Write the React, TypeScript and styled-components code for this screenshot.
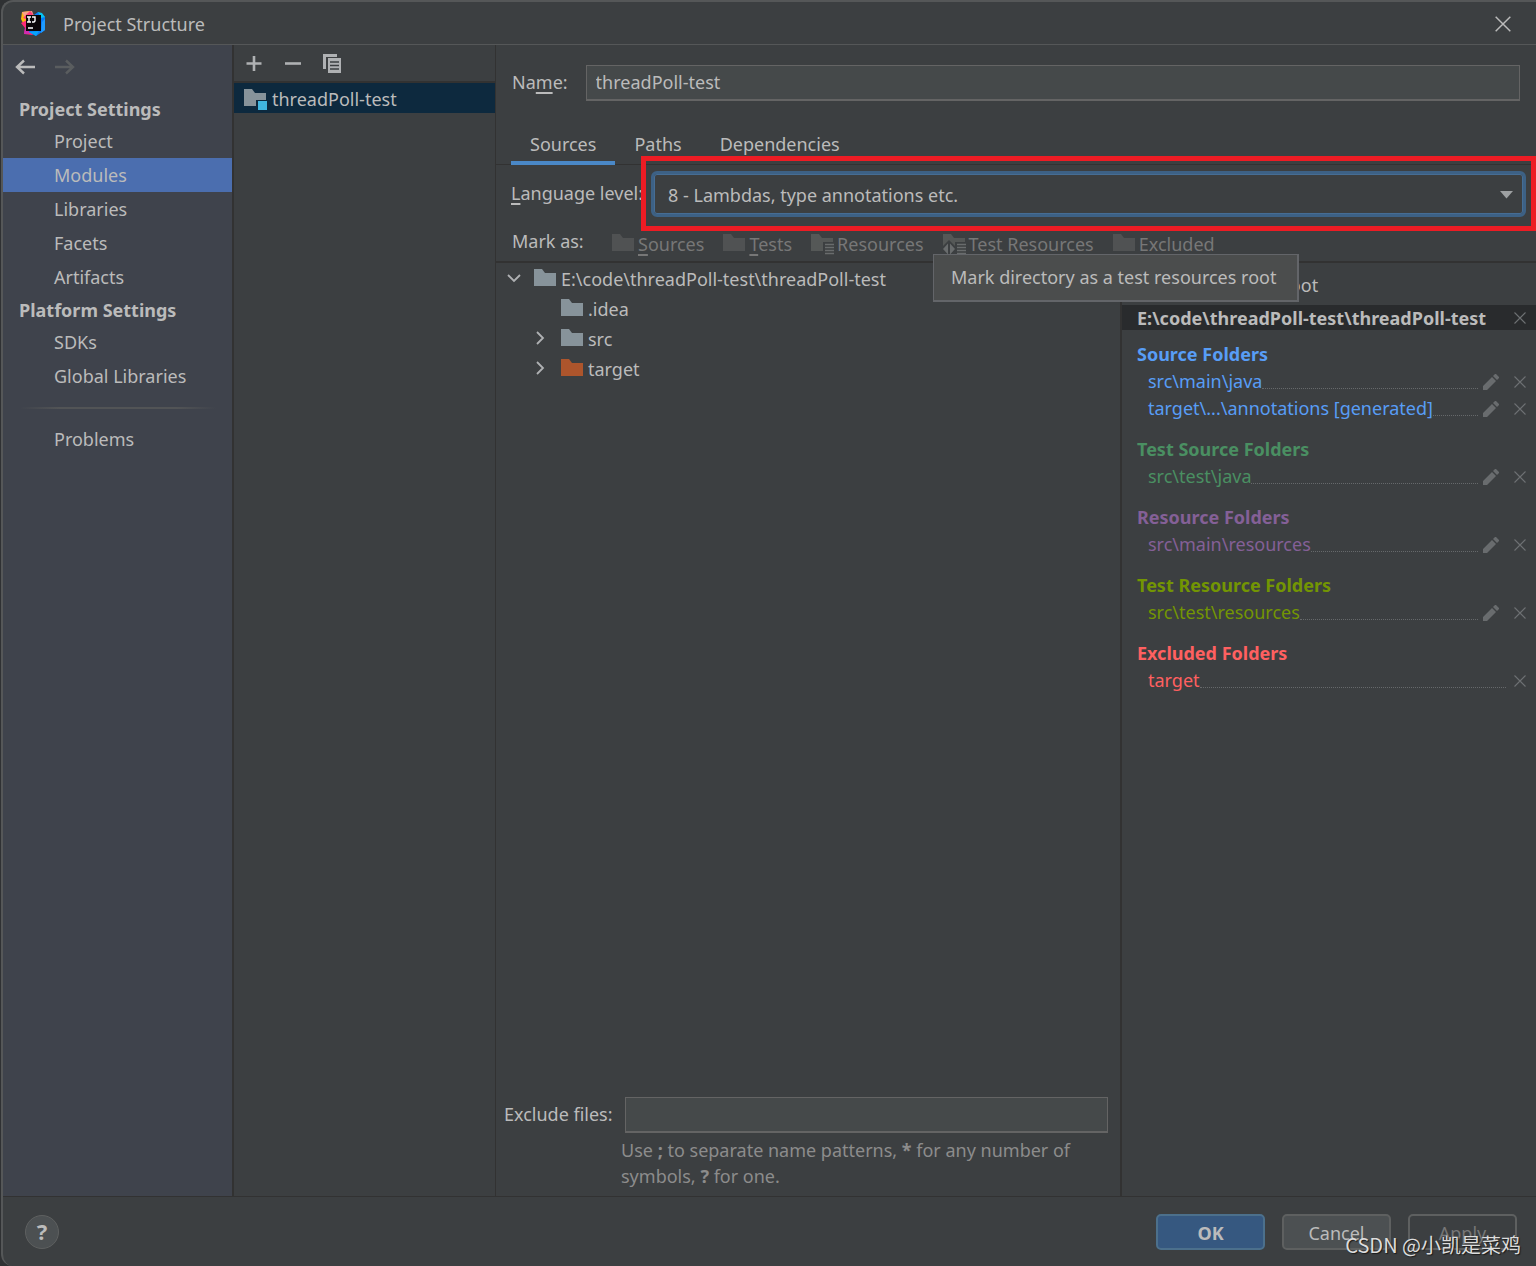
import React, { useState } from "react";
import styled, { createGlobalStyle, css } from "styled-components";

const color = {
  panel: "#3c3f41",
  sidebar: "#3f434c",
  line: "#323232",
  edge: "#555758",
  text: "#bbbbbb",
  muted: "#777777",
  hint: "#8c8c8c",
  field: "#45494a",
  fieldBorder: "#646464",
  icon: "#afb1b3",
  accent: "#4a88c7",
};

const GlobalStyle = createGlobalStyle`
  *, *::before, *::after { box-sizing: border-box; }
  body {
    margin: 0;
    background: #2f3133;
    color: ${color.text};
    font: 18px/24px "Noto Sans", "Noto Sans CJK SC", sans-serif;
  }
  button, input, select { font: inherit; color: inherit; }
  svg { display: block; flex: none; }
`;

const Dialog = styled.div`
  position: relative;
  display: flex;
  flex-direction: column;
  min-height: 100vh;
  padding-top: 1px;
  margin-left: 1px;
  background: ${color.panel};
  border: 2px solid ${color.edge};
  border-right: 0;
  border-bottom: 0;
  border-radius: 12px 0 0 12px;
`;

const TitleBar = styled.header`
  display: flex;
  align-items: center;
  height: 42px;
  padding: 0 25px 0 18px;
  border-bottom: 1px solid ${color.edge};
`;

const Title = styled.h1`
  flex: 1;
  margin: 0 0 0 17px;
  font-size: 18px;
  font-weight: 400;
`;

const IconButton = styled.button`
  display: grid;
  place-items: center;
  flex: none;
  padding: 0;
  border: 0;
  background: none;
`;

const Body = styled.div`
  display: flex;
  flex: 1;
`;

const Sidebar = styled.nav`
  display: flex;
  flex-direction: column;
  width: 231px;
  flex: none;
  background: ${color.sidebar};
  border-right: 2px solid ${color.line};
`;

const History = styled.div`
  display: flex;
  gap: 20px;
  padding: 12px 12px 17px;
`;

const NavHeading = styled.h2`
  margin: 0;
  padding-left: 16px;
  font-size: 18px;
  line-height: 30px;
  font-weight: 700;

  a + & { margin-top: 1px; }
`;

const NavLink = styled.a<{ $active?: boolean }>`
  padding-left: 51px;
  line-height: 34px;
  color: inherit;
  text-decoration: none;
  background: ${(p) => (p.$active ? "#4b6eaf" : "transparent")};
`;

const NavDivider = styled.hr`
  width: 196px;
  height: 2px;
  margin: 14px 17px 13px;
  border: 0;
  background: linear-gradient(90deg, transparent, #525456 20%, #525456 80%, transparent);
`;

const ModuleColumn = styled.section`
  width: 262px;
  flex: none;
  border-right: 1px solid ${color.line};
`;

const ModuleToolbar = styled.div`
  display: flex;
  align-items: center;
  gap: 19px;
  height: 38px;
  padding: 0 10px;
  border-bottom: 2px solid ${color.line};
`;

const ModuleRow = styled.div`
  display: flex;
  align-items: center;
  gap: 5px;
  height: 30px;
  padding: 1px 10px 0;
  background: #0d293e;
`;

const Main = styled.main`
  display: flex;
  flex: 1;
  flex-direction: column;
  min-width: 0;
`;

const NameRow = styled.div`
  display: flex;
  align-items: center;
  gap: 18px;
  padding: 20px 16px 0;

  label { padding-bottom: 2px; }
`;

const TextInput = styled.input`
  flex: 1;
  min-width: 0;
  height: 36px;
  padding: 0 9px 2px;
  background: ${color.field};
  border: 1px solid ${color.fieldBorder};
  border-bottom-width: 2px;
  outline: 0;
`;

const Mnemonic = styled.span`
  text-decoration: underline 2px;
  text-underline-offset: 3px;
`;

const Tabs = styled.div`
  display: flex;
  height: 64px;
  padding: 23px 0 0 15px;
  border-bottom: 1px solid ${color.line};
`;

const Tab = styled.button<{ $active?: boolean }>`
  height: 41px;
  padding: 2px 19px 0;
  border: 0;
  border-bottom: 4px solid ${(p) => (p.$active ? color.accent : "transparent")};
  background: none;
`;

const LanguageRow = styled.div`
  position: relative;
  display: flex;
  align-items: center;
  padding: 6px 10px 0 15px;

  label {
    width: 140px;
    flex: none;
    padding-bottom: 2px;
  }
`;

const SelectBox = styled.div`
  position: relative;
  flex: 1;

  svg {
    position: absolute;
    right: 13px;
    top: 20px;
    pointer-events: none;
  }
`;

const Select = styled.select`
  appearance: none;
  display: block;
  width: 100%;
  height: 46px;
  padding: 2px 14px 0;
  background: ${color.panel};
  border: 3px solid #3d6185;
  border-radius: 6px;
  box-shadow: inset 0 0 0 1px #466d94;
  outline: 0;
`;

const Highlight = styled.div`
  position: absolute;
  inset: -9px 0 -14px 145px;
  border: 5px solid #ed1c24;
  pointer-events: none;
`;

const MarkRow = styled.div`
  position: relative;
  display: flex;
  align-items: center;
  height: 46px;
  padding: 4px 0 0 16px;
  border-bottom: 2px solid ${color.line};
`;

const MarkLabel = styled.span`
  width: 100px;
`;

const MarkActions = styled.div`
  display: flex;
  gap: 19px;
  padding-top: 5px;
`;

const MarkButton = styled.button`
  display: flex;
  align-items: center;
  gap: 3px;
  padding: 0;
  border: 0;
  background: none;
  color: ${color.muted};
`;

const Tooltip = styled.div`
  position: absolute;
  z-index: 2;
  left: 437px;
  top: 37px;
  padding: 10px 21px 11px 17px;
  background: #4b4d4d;
  border: 1px solid #636569;
  border-right-width: 2px;
  border-bottom-width: 2px;
  white-space: nowrap;
`;

const Split = styled.div`
  display: flex;
  flex: 1;
`;

const TreePane = styled.section`
  display: flex;
  flex: 1;
  flex-direction: column;
  min-width: 0;
  border-right: 2px solid ${color.line};
`;

const Tree = styled.ul`
  flex: 1;
  margin: 0;
  padding: 1px 0 0;
  list-style: none;
`;

const TreeItem = styled.li<{ $depth: number }>`
  display: flex;
  align-items: center;
  height: 30px;
  padding-left: ${(p) => 10 + p.$depth * 27}px;
`;

const Twisty = styled.span`
  width: 28px;
`;

const TreeLabel = styled.span`
  margin-left: 4px;
`;

const ExcludeForm = styled.div`
  display: grid;
  grid-template-columns: 121px 1fr;
  align-items: center;
  padding: 0 12px 7px 8px;

  label { padding-bottom: 2px; }
`;

const Hint = styled.p`
  grid-column: 2;
  max-width: 470px;
  margin: 4px 0 0 -4px;
  line-height: 26px;
  color: ${color.hint};
`;

const RootsPane = styled.aside`
  width: 414px;
  flex: none;
`;

const AddRoot = styled.button`
  display: flex;
  align-items: center;
  gap: 10px;
  height: 42px;
  padding: 2px 0 0 16px;
  border: 0;
  background: none;
`;

const RootHeader = styled.div`
  display: flex;
  align-items: center;
  justify-content: space-between;
  height: 25px;
  padding: 0 10px 0 15px;
  margin-bottom: 11px;
  background: #292b2d;
  font-weight: 700;
`;

const Group = styled.section<{ $tint: string }>`
  margin-bottom: 14px;
  padding: 0 10px 0 15px;
  line-height: 27px;
  color: ${(p) => p.$tint};
`;

const GroupTitle = styled.h3`
  margin: 0;
  font-size: 18px;
  font-weight: 700;
`;

const FolderRow = styled.div`
  display: flex;
  align-items: center;
  padding-left: 11px;
`;

const Leader = styled.span`
  flex: 1;
  height: 15px;
  border-bottom: 1px dotted #66696b;
`;

const PencilSlot = styled.div`
  margin: 0 15px 0 5px;
`;

const CloseSlot = styled.div<{ $spaced?: boolean }>`
  margin-left: ${(p) => (p.$spaced ? 8 : 0)}px;
`;

const Footer = styled.footer`
  display: flex;
  align-items: center;
  gap: 17px;
  height: 70px;
  padding: 0 19px 0 22px;
  border-top: 1px solid ${color.line};
`;

const Help = styled.button`
  width: 34px;
  height: 34px;
  margin-right: auto;
  padding: 0 0 2px;
  border: 1px solid #5e6060;
  border-radius: 50%;
  background: #4c5052;
  font-size: 22px;
  font-weight: 700;
`;

const ActionButton = styled.button<{ $kind?: "primary" | "disabled" }>`
  width: 109px;
  height: 36px;
  padding: 2px 0 0;
  border: 2px solid #5e6060;
  border-radius: 5px;
  background: #4c5052;
  ${(p) =>
    p.$kind === "primary" &&
    css`
      border-color: #4c708c;
      background: #365880;
      font-weight: 700;
    `}
  ${(p) =>
    p.$kind === "disabled" &&
    css`
      background: ${color.panel};
      color: ${color.muted};
    `}
`;

const Watermark = styled.div`
  position: absolute;
  right: 15px;
  bottom: 6px;
  font: 20px/30px "Noto Sans CJK SC", sans-serif;
  color: #dcdcdc;
  text-shadow: 1px 1px 1px #1b1b1b;
  pointer-events: none;
`;

const AppLogo = () => (
  <svg width="25" height="25" viewBox="0 0 25 25" aria-hidden="true">
    <path d="M1 1 L9 0 L12 12 L3 14 L0 8Z" fill="#fdb60d" />
    <path d="M1 1 L11 0 L13 5 L5 9Z" fill="#f9a08a" />
    <path d="M9 0 L12 3 L8 9 L2 7Z" fill="#fe3d77" />
    <path d="M0 12 L6 9 L12 24 L3 23 L4 17Z" fill="#fe2a78" />
    <path d="M4 17 L10 16 L8 23 L3 23Z" fill="#d02bb0" />
    <path d="M13 4 L17 1 L24 6 L24 19 L15 25 L8 21Z" fill="#087cfa" />
    <path d="M17 1 L21 2 L24 6 L20 7Z" fill="#07c3f2" />
    <path d="M21 11 L24 8 L24 19 L20 22Z" fill="#1e9bff" />
    <path d="M8 21 L15 25 L18 20Z" fill="#07a4fa" />
    <rect x="5" y="4" width="15" height="16" fill="#0b0608" />
    <path d="M6 6h4M8 6v5M6 11h4M11 6h3v4l-1 1h-2M7 17h5" fill="none" stroke="#fff" strokeWidth="1.4" />
  </svg>
);

const Cross = ({ size = 12, stroke = "#6e7173" }: { size?: number; stroke?: string }) => (
  <svg width={size} height={size} viewBox="0 0 12 12" aria-hidden="true">
    <path d="M.5.5l11 11M11.5.5l-11 11" stroke={stroke} strokeWidth="1.1" />
  </svg>
);

const Arrow = ({ forward }: { forward?: boolean }) => (
  <svg width="20" height="20" viewBox="0 0 20 20" aria-hidden="true">
    <path
      d={forward ? "M0 10h18M11 3.5l7 6.5-7 6.5" : "M20 10H2M9 3.5L2 10l7 6.5"}
      fill="none"
      stroke={forward ? "#5a5d5f" : "#bbbbbb"}
      strokeWidth="2.4"
    />
  </svg>
);

const Plus = () => (
  <svg width="20" height="20" viewBox="0 0 20 20" aria-hidden="true">
    <path d="M10 3v15M2.5 10.500h15" stroke={color.icon} strokeWidth="2.6" />
  </svg>
);

const Minus = () => (
  <svg width="20" height="20" viewBox="0 0 20 20" aria-hidden="true">
    <path d="M2 10.500h16" stroke={color.icon} strokeWidth="2.6" />
  </svg>
);

const Copy = () => (
  <svg width="20" height="20" viewBox="0 0 20 20" aria-hidden="true">
    <path d="M1 1h14v3H4v12H1z" fill={color.icon} />
    <path d="M6 5h13v15H6z" fill={color.icon} />
    <path d="M8 9h9M8 12.5h9M8 16h9" stroke={color.panel} strokeWidth="1.3" />
  </svg>
);

type Badge = "module" | "lines" | "test-lines";

const Folder = ({ fill = "#87939a", badge }: { fill?: string; badge?: Badge }) => (
  <svg width="23" height="22" viewBox="0 0 23 22" aria-hidden="true">
    <path d="M0 1h8l3 4h11v13H0z" fill={fill} />
    {badge === "module" && (
      <>
        <path d="M12 12h11v10H12z" fill="#0d293e" />
        <path d="M14 13h9v9h-9z" fill="#40b6e0" />
      </>
    )}
    {(badge === "lines" || badge === "test-lines") && (
      <>
        <path d="M12 9h11v13H12z" fill={color.panel} />
        <path d="M14 11.5h9M14 14.5h9M14 17.5h9M14 20.5h9" stroke="#696c6d" strokeWidth="1.4" />
      </>
    )}
    {badge === "test-lines" && (
      <>
        <path d="M0 13l6-6 6 6v9H0z" fill={color.panel} />
        <path d="M5 10.5v11L0 16zM7 10.5v11l5-5.500z" fill="#696c6d" />
      </>
    )}
  </svg>
);

const Chevron = ({ open }: { open?: boolean }) => (
  <svg width="16" height="16" viewBox="0 0 16 16" aria-hidden="true">
    <path
      d={open ? "M2 4l6 6 6-6" : "M4 1l6 6-6 6"}
      fill="none"
      stroke={color.icon}
      strokeWidth="1.8"
    />
  </svg>
);

const Pencil = () => (
  <svg width="16" height="16" viewBox="0 0 16 16" aria-hidden="true">
    <path d="M0 16v-4L9 3l4 4-9 9zM10 2l2-2h1l3 3v1l-2 2z" fill="#696c6e" />
  </svg>
);

const Caret = () => (
  <svg width="13" height="8" viewBox="0 0 13 8" aria-hidden="true">
    <path d="M0 0h13L6.500 7.500z" fill="#9da0a2" />
  </svg>
);

const projectItems = ["Project", "Modules", "Libraries", "Facets", "Artifacts"];
const platformItems = ["SDKs", "Global Libraries"];
const tabNames = ["Sources", "Paths", "Dependencies"];

const markKinds: { label: string; mnemonic: boolean; fill: string; badge?: Badge }[] = [
  { label: "Sources", mnemonic: true, fill: "#505253" },
  { label: "Tests", mnemonic: true, fill: "#505253" },
  { label: "Resources", mnemonic: false, fill: "#555857", badge: "lines" },
  { label: "Test Resources", mnemonic: false, fill: "#555857", badge: "test-lines" },
  { label: "Excluded", mnemonic: true, fill: "#505253" },
];

const treeRows: { label: string; depth: number; state?: "open" | "closed"; fill?: string }[] = [
  { label: "E:\\code\\threadPoll-test\\threadPoll-test", depth: 0, state: "open" },
  { label: ".idea", depth: 1 },
  { label: "src", depth: 1, state: "closed" },
  { label: "target", depth: 1, state: "closed", fill: "#ad552c" },
];

const folderGroups = [
  { title: "Source Folders", tint: "#589df6", paths: ["src\\main\\java", "target\\...\\annotations [generated]"] },
  { title: "Test Source Folders", tint: "#4a8f62", paths: ["src\\test\\java"] },
  { title: "Resource Folders", tint: "#846097", paths: ["src\\main\\resources"] },
  { title: "Test Resource Folders", tint: "#739503", paths: ["src\\test\\resources"] },
  { title: "Excluded Folders", tint: "#ff6060", paths: ["target"], fixed: true },
];

export default function App() {
  const [section, setSection] = useState("Modules");
  const [tab, setTab] = useState("Sources");
  const [name, setName] = useState("threadPoll-test");

  const navLink = (item: string) => (
    <NavLink
      key={item}
      href={`#${item.replace(" ", "-")}`}
      $active={item === section}
      onClick={() => setSection(item)}
    >
      {item}
    </NavLink>
  );

  return (
    <>
      <GlobalStyle />
      <Dialog>
        <TitleBar>
          <AppLogo />
          <Title>Project Structure</Title>
          <IconButton aria-label="Close">
            <Cross size={16} stroke="#bbbbbb" />
          </IconButton>
        </TitleBar>

        <Body>
          <Sidebar aria-label="Settings sections">
            <History>
              <IconButton aria-label="Back"><Arrow /></IconButton>
              <IconButton aria-label="Forward" disabled><Arrow forward /></IconButton>
            </History>
            <NavHeading>Project Settings</NavHeading>
            {projectItems.map(navLink)}
            <NavHeading>Platform Settings</NavHeading>
            {platformItems.map(navLink)}
            <NavDivider />
            {navLink("Problems")}
          </Sidebar>

          <ModuleColumn aria-label="Modules">
            <ModuleToolbar>
              <IconButton aria-label="Add"><Plus /></IconButton>
              <IconButton aria-label="Remove"><Minus /></IconButton>
              <IconButton aria-label="Copy"><Copy /></IconButton>
            </ModuleToolbar>
            <ModuleRow>
              <Folder badge="module" />
              threadPoll-test
            </ModuleRow>
          </ModuleColumn>

          <Main>
            <NameRow>
              <label htmlFor="module-name">Na<Mnemonic>m</Mnemonic>e:</label>
              <TextInput id="module-name" value={name} onChange={(e) => setName(e.target.value)} />
            </NameRow>

            <Tabs role="tablist">
              {tabNames.map((t) => (
                <Tab key={t} role="tab" aria-selected={t === tab} $active={t === tab} onClick={() => setTab(t)}>
                  {t}
                </Tab>
              ))}
            </Tabs>

            <LanguageRow>
              <label htmlFor="language-level"><Mnemonic>L</Mnemonic>anguage level:</label>
              <SelectBox>
                <Select id="language-level">
                  <option>8 - Lambdas, type annotations etc.</option>
                </Select>
                <Caret />
              </SelectBox>
              <Highlight />
            </LanguageRow>

            <MarkRow>
              <MarkLabel>Mark as:</MarkLabel>
              <MarkActions>
                {markKinds.map(({ label, mnemonic, fill, badge }) => (
                  <MarkButton key={label} disabled>
                    <Folder fill={fill} badge={badge} />
                    <span>
                      {mnemonic ? <Mnemonic>{label[0]}</Mnemonic> : label[0]}
                      {label.slice(1)}
                    </span>
                  </MarkButton>
                ))}
              </MarkActions>
              <Tooltip role="tooltip">Mark directory as a test resources root</Tooltip>
            </MarkRow>

            <Split>
              <TreePane>
                <Tree>
                  {treeRows.map(({ label, depth, state, fill }) => (
                    <TreeItem key={label} $depth={depth}>
                      <Twisty>{state && <Chevron open={state === "open"} />}</Twisty>
                      <Folder fill={fill} />
                      <TreeLabel>{label}</TreeLabel>
                    </TreeItem>
                  ))}
                </Tree>
                <ExcludeForm>
                  <label htmlFor="exclude-files">Exclude files:</label>
                  <TextInput id="exclude-files" />
                  <Hint>
                    Use <b>;</b> to separate name patterns, <b>*</b> for any number of symbols, <b>?</b> for one.
                  </Hint>
                </ExcludeForm>
              </TreePane>

              <RootsPane>
                <AddRoot><Plus />Add Content Root</AddRoot>
                <RootHeader>
                  E:\code\threadPoll-test\threadPoll-test
                  <IconButton aria-label="Remove content root"><Cross /></IconButton>
                </RootHeader>
                {folderGroups.map(({ title, tint, paths, fixed }) => (
                  <Group key={title} $tint={tint}>
                    <GroupTitle>{title}</GroupTitle>
                    {paths.map((path) => (
                      <FolderRow key={path}>
                        {path}
                        <Leader />
                        {!fixed && (
                          <PencilSlot>
                            <IconButton aria-label={`Edit ${path}`}><Pencil /></IconButton>
                          </PencilSlot>
                        )}
                        <CloseSlot $spaced={fixed}>
                          <IconButton aria-label={`Remove ${path}`}><Cross /></IconButton>
                        </CloseSlot>
                      </FolderRow>
                    ))}
                  </Group>
                ))}
              </RootsPane>
            </Split>
          </Main>
        </Body>

        <Footer>
          <Help aria-label="Help">?</Help>
          <ActionButton $kind="primary">OK</ActionButton>
          <ActionButton>Cancel</ActionButton>
          <ActionButton $kind="disabled" disabled>Apply</ActionButton>
        </Footer>
        <Watermark>CSDN @小凯是菜鸡</Watermark>
      </Dialog>
    </>
  );
}
